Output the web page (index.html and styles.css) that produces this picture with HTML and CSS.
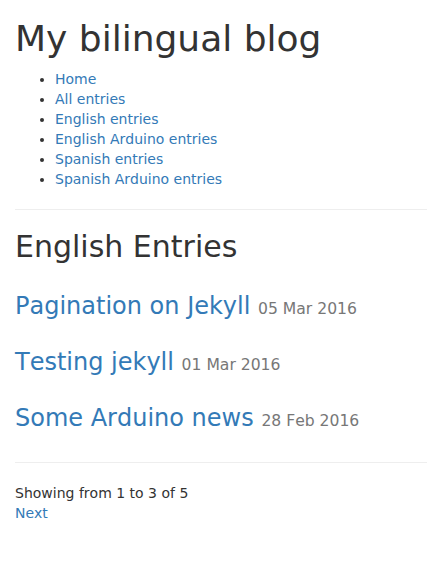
FILE: index.html
```html
<!DOCTYPE html>
<html lang="en">
<head>
<meta charset="utf-8">
<title>My bilingual blog</title>
<link rel="stylesheet" href="styles.css">
</head>
<body>
<div class="container">
  <h1 class="site-title">My bilingual blog</h1>
  <ul class="nav-list">
    <li><a href="#">Home</a></li>
    <li><a href="#">All entries</a></li>
    <li><a href="#">English entries</a></li>
    <li><a href="#">English Arduino entries</a></li>
    <li><a href="#">Spanish entries</a></li>
    <li><a href="#">Spanish Arduino entries</a></li>
  </ul>
  <hr class="divider">
  <h2 class="section-title">English Entries</h2>
  <div class="posts">
    <h3 class="post-title"><a href="#">Pagination on Jekyll</a> <small class="post-date">05 Mar 2016</small></h3>
    <h3 class="post-title"><a href="#">Testing jekyll</a> <small class="post-date">01 Mar 2016</small></h3>
    <h3 class="post-title"><a href="#">Some Arduino news</a> <small class="post-date">28 Feb 2016</small></h3>
  </div>
  <hr class="divider">
  <p class="pager">Showing from 1 to 3 of 5<br><a href="#">Next</a></p>
</div>
</body>
</html>
```

FILE: styles.css
```css
html, body {
  margin: 0;
  padding: 0;
  background: #fff;
}
body {
  font-family: "DejaVu Sans", sans-serif;
  font-size: 14px;
  line-height: 20px;
  color: #333;
  font-kerning: none;
}
a {
  color: #337ab7;
  text-decoration: none;
}
.container {
  padding: 0 15px;
}
.site-title {
  font-size: 36px;
  font-weight: 500;
  line-height: 1.1;
  margin: 19px 0 10px;
}
.nav-list {
  margin: 0 0 10px;
  padding-left: 40px;
}
.divider {
  margin: 20px 0;
  border: 0;
  border-top: 1px solid #eee;
  height: 0;
}
.section-title {
  font-size: 30px;
  font-weight: 500;
  line-height: 1.1;
  margin: 20px 0 10px;
}
.posts {
  display: flex;
  flex-direction: column;
}
.post-title {
  font-size: 24px;
  font-weight: 500;
  line-height: 1.1;
  margin: 20px 0 10px;
}
.post-date {
  font-size: 65%;
  font-weight: 400;
  line-height: 1;
  color: #777;
}
.pager {
  margin: 0 0 10px;
}
```
